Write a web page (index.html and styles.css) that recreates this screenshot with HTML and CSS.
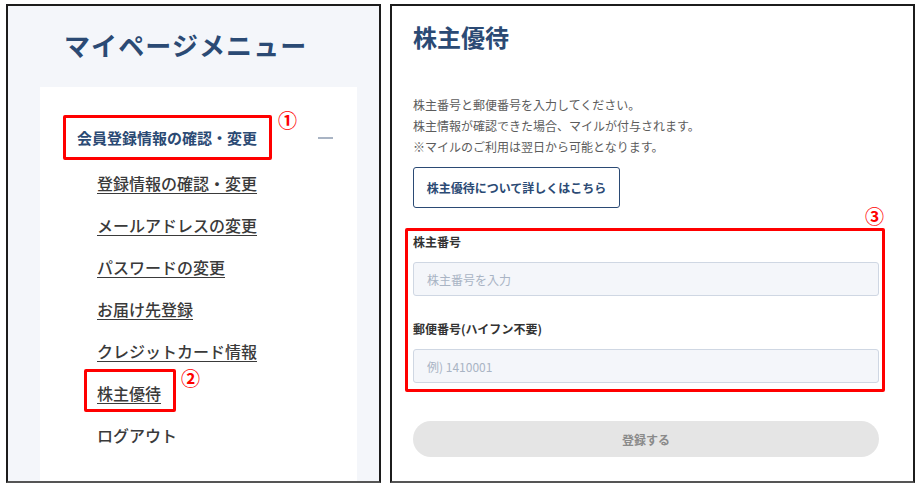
FILE: index.html
```html
<!DOCTYPE html>
<html lang="ja">
<head>
  <meta charset="utf-8">
  <title>マイページ - 株主優待</title>
  <meta name="viewport" content="width=device-width, initial-scale=1">
  <link rel="stylesheet" href="styles.css">
</head>
<body>
  <div class="screens">
    <section class="shot menu">
      <h1 class="menu-title">マイページメニュー</h1>
      <nav class="menu-card">
        <div class="menu-group">
          <span class="group-label">会員登録情報の確認・変更<span class="num num-1">①</span></span>
          <span class="toggle"></span>
        </div>
        <ul class="menu-list">
          <li><a href="#">登録情報の確認・変更</a></li>
          <li><a href="#">メールアドレスの変更</a></li>
          <li><a href="#">パスワードの変更</a></li>
          <li><a href="#">お届け先登録</a></li>
          <li><a href="#">クレジットカード情報</a></li>
          <li><a class="marked" href="#">株主優待<span class="num num-2">②</span></a></li>
          <li><a class="plain" href="#">ログアウト</a></li>
        </ul>
      </nav>
    </section>

    <section class="shot form">
      <h2 class="page-title">株主優待</h2>
      <p class="lead">
        株主番号と郵便番号を入力してください。<br>
        株主情報が確認できた場合、マイルが付与されます。<br>
        ※マイルのご利用は翌日から可能となります。
      </p>
      <a class="detail-btn" href="#">株主優待について詳しくはこちら</a>
      <div class="fields">
        <span class="num num-3">③</span>
        <label for="holder">株主番号</label>
        <input id="holder" type="text" placeholder="株主番号を入力">
        <label for="zip" class="second">郵便番号(ハイフン不要)</label>
        <input id="zip" type="text" placeholder="例) 1410001">
      </div>
      <button class="submit" disabled>登録する</button>
    </section>
  </div>
</body>
</html>
```

FILE: styles.css
```css
*, *:before, *:after {
  box-sizing: border-box;
}
html, body {
  margin: 0;
  padding: 0;
  background: #fff;
  font-family: "Noto Sans CJK JP", "Noto Sans", sans-serif;
  color: #333;
}
.screens {
  display: flex;
  gap: 9px;
  padding: 4px 0 0 6px;
}
.shot {
  height: 479px;
  border: 2px solid #1c1c1c;
  border-bottom-color: #555;
  box-shadow: 0 1px 0 #aaa;
  overflow: hidden;
}

/* left: menu */
.menu {
  width: 375px;
  background: #f4f6fa;
  display: flex;
  flex-direction: column;
  padding-top: 21px;
}
.menu-title {
  margin: 0 0 24px 56px;
  font-size: 26px;
  line-height: 36px;
  letter-spacing: 1.1px;
  font-weight: 700;
  color: #2b4a74;
}
.menu-card {
  flex-grow: 1;
  width: 317px;
  margin-left: 32px;
  background: #fff;
  padding: 28px 24px 0 23px;
}
.menu-group {
  display: flex;
  align-items: center;
  justify-content: space-between;
}
.group-label {
  position: relative;
  display: inline-block;
  border: 3px solid #f00;
  border-radius: 2px;
  padding: 9px 12px 8px 11px;
  font-size: 15px;
  line-height: 22px;
  font-weight: 700;
  color: #2b4a74;
}
.toggle {
  width: 15px;
  height: 2px;
  background: #a9b4c4;
}
.menu-list {
  list-style: none;
  margin: 2px 0 0;
  padding: 0 0 0 34px;
}
.menu-list li {
  line-height: 42px;
}
.menu-list a {
  position: relative;
  font-size: 16px;
  font-weight: 500;
  color: #3a3a3a;
  text-decoration: underline;
  text-decoration-thickness: 1px;
  text-underline-offset: 3px;
}
.menu-list a.plain {
  text-decoration: none;
}
.menu-list a.marked {
  display: inline-block;
  line-height: 22px;
}
.menu-list a.marked:before {
  content: "";
  position: absolute;
  top: -13px;
  right: -15px;
  bottom: -8px;
  left: -13px;
  border: 3px solid #f00;
  border-radius: 2px;
}

/* annotation numbers */
.num {
  position: absolute;
  font-size: 19px;
  line-height: 19px;
  font-weight: 700;
  color: #f00;
}
.num-1 {
  left: calc(100% + 9px);
  top: -8px;
}
.num-2 {
  left: 84px;
  top: -14px;
}
.num-3 {
  right: -5px;
  top: -27px;
}

/* right: form */
.form {
  width: 525px;
  padding: 14px 34px 0 21px;
  background: #fff;
}
.page-title {
  margin: 0;
  font-size: 24px;
  line-height: 34px;
  font-weight: 700;
  color: #2b4a74;
}
.lead {
  margin: 40px 0 10px;
  font-size: 12px;
  line-height: 21px;
  color: #5c5c5c;
}
.detail-btn {
  display: flex;
  align-items: center;
  justify-content: center;
  width: 207px;
  height: 41px;
  border: 1px solid #2b4a74;
  border-radius: 3px;
  font-size: 12px;
  font-weight: 700;
  color: #2b4a74;
  text-decoration: none;
}
.fields {
  position: relative;
  margin-top: 25px;
}
.fields:before {
  content: "";
  position: absolute;
  top: -5px;
  right: -6px;
  bottom: -9px;
  left: -8px;
  border: 3px solid #f00;
  border-radius: 2px;
  pointer-events: none;
}
.fields label {
  display: block;
  font-size: 12px;
  line-height: 18px;
  font-weight: 700;
  color: #333;
  margin-bottom: 11px;
}
.fields label.second {
  margin-top: 24px;
}
.fields input {
  display: block;
  width: 100%;
  height: 34px;
  padding: 0 13px;
  background: #f4f6fa;
  border: 1px solid #cfd7e3;
  border-radius: 3px;
  font-family: inherit;
  font-size: 12px;
  color: #333;
}
.fields input::placeholder {
  color: #a9b4c4;
}
.submit {
  display: block;
  width: 100%;
  height: 36px;
  margin-top: 38px;
  border: none;
  border-radius: 18px;
  background: #e5e5e5;
  font-family: inherit;
  font-size: 12px;
  font-weight: 700;
  color: #8a8a8a;
}
```
